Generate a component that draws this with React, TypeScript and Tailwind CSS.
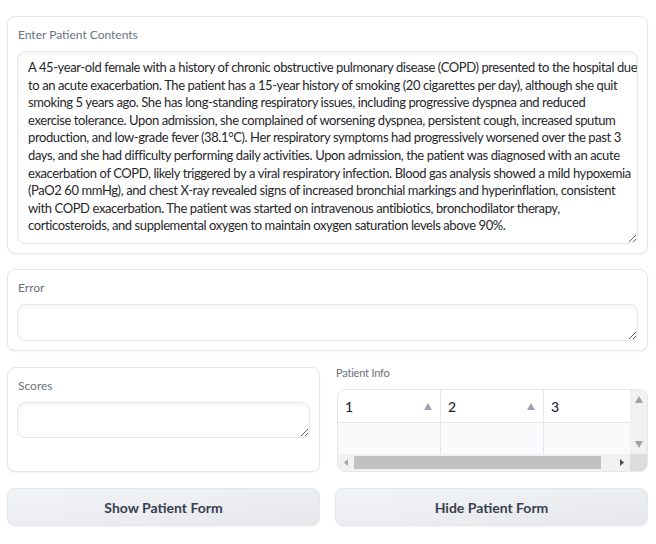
import React from "react";

const lines = [
  "A 45-year-old female with a history of chronic obstructive pulmonary disease (COPD) presented to the hospital due",
  "to an acute exacerbation. The patient has a 15-year history of smoking (20 cigarettes per day), although she quit",
  "smoking 5 years ago. She has long-standing respiratory issues, including progressive dyspnea and reduced",
  "exercise tolerance. Upon admission, she complained of worsening dyspnea, persistent cough, increased sputum",
  "production, and low-grade fever (38.1°C). Her respiratory symptoms had progressively worsened over the past 3",
  "days, and she had difficulty performing daily activities. Upon admission, the patient was diagnosed with an acute",
  "exacerbation of COPD, likely triggered by a viral respiratory infection. Blood gas analysis showed a mild hypoxemia",
  "(PaO2 60 mmHg), and chest X-ray revealed signs of increased bronchial markings and hyperinflation, consistent",
  "with COPD exacerbation. The patient was started on intravenous antibiotics, bronchodilator therapy,",
  "corticosteroids, and supplemental oxygen to maintain oxygen saturation levels above 90%.",
];

const panel =
  "rounded-lg border border-[#e5e7eb] bg-white p-[9px] shadow-[0_1px_2px_rgba(0,0,0,0.05)]";
const label = "block pl-[1px] h-[18px] leading-[18px] text-[12px] text-[#6b7280] mb-[7px]";
const ta =
  "block w-full rounded-lg border border-[#e5e7eb] bg-white px-[10px] text-[13px] tracking-[-0.4px] leading-[17.6px] text-[#27272a] outline-none shadow-[inset_0_2px_4px_rgba(0,0,0,0.05)]";

function Tri({ className }: { className: string }) {
  return (
    <svg width="8" height="7" viewBox="0 0 8 7" className={className}>
      <path d="M4 0 L8 7 L0 7 Z" fill="currentColor" />
    </svg>
  );
}

function HeaderCell({ n }: { n: string }) {
  return (
    <div className="flex w-[103px] shrink-0 items-center justify-between border-r border-[#e5e7eb] pl-[7px] pr-[8px] h-full">
      <span className="text-[14px] font-medium text-[#1f2937]">{n}</span>
      <Tri className="text-[#9ca3af]" />
    </div>
  );
}

export default function App() {
  return (
    <div
      className="min-h-[544px] bg-white pt-[16px] pl-[7px] pr-[8px]"
      style={{ fontFamily: "Lato, 'Liberation Sans', sans-serif" }}
    >
      <div className={panel}>
        <span className={label}>Enter Patient Contents</span>
        <textarea
          readOnly
          value={lines.join("\n")}
          className={
            ta +
            " h-[193px] pt-[7px] pb-[7px] overflow-hidden whitespace-pre border-[#93c5fd] shadow-[0_0_0_2px_#e0ecfd]"
          }
        />
      </div>

      <div className={panel + " mt-[15px]"}>
        <span className={label}>Error</span>
        <textarea readOnly value="" className={ta + " h-[37px] py-[8px] overflow-hidden"} />
      </div>

      <div className="mt-[16px] grid grid-cols-2 gap-[15px]">
        <div className={panel}>
          <span className={label}>Scores</span>
          <textarea readOnly value="" className={ta + " h-[36px] py-[8px] overflow-hidden"} />
        </div>

        <div className="flex flex-col">
          <span className="block pl-[1px] text-[11px] tracking-[-0.2px] leading-[12px] text-[#6b7280] mb-[10px]">
            Patient Info
          </span>
          <div className="ml-[2px] flex h-[83px] flex-col overflow-hidden rounded-lg border border-[#e5e7eb] bg-white">
            <div className="flex h-[64px]">
              <div className="flex-1 overflow-hidden">
                <div className="flex h-[33px] border-b border-[#e5e7eb] bg-white">
                  <HeaderCell n="1" />
                  <HeaderCell n="2" />
                  <HeaderCell n="3" />
                </div>
                <div className="flex h-[31px] bg-[#f9fafb]">
                  <div className="w-[103px] shrink-0 border-r border-[#e5e7eb]" />
                  <div className="w-[103px] shrink-0 border-r border-[#e5e7eb]" />
                  <div className="w-[103px] shrink-0" />
                </div>
              </div>
              <div className="flex w-[17px] flex-col items-center justify-between bg-[#f1f1f1] py-[6px]">
                <Tri className="text-[#a3a3a3]" />
                <Tri className="rotate-180 text-[#a3a3a3]" />
              </div>
            </div>
            <div className="flex h-[17px]">
              <div className="flex flex-1 items-center bg-[#f1f1f1]">
                <div className="flex w-[16px] items-center justify-center">
                  <svg width="4" height="7" viewBox="0 0 4 7">
                    <path d="M4 0 L0 3.5 L4 7 Z" fill="#a3a3a3" />
                  </svg>
                </div>
                <div className="h-[13px] w-[247px] bg-[#c1c1c1]" />
                <div className="flex-1" />
                <div className="flex w-[16px] items-center justify-center">
                  <svg width="4" height="7" viewBox="0 0 4 7">
                    <path d="M0 0 L4 3.5 L0 7 Z" fill="#505050" />
                  </svg>
                </div>
              </div>
              <div className="w-[17px] bg-[#dcdcdc]" />
            </div>
          </div>
        </div>
      </div>

      <div className="mt-[16px] grid grid-cols-2 gap-[15px]">
        <button className="h-[38px] rounded-lg border border-[#e5e7eb] bg-gradient-to-br from-[#f3f4f6] to-[#e5e7eb] text-[14px] font-bold text-[#374151] shadow-[0_1px_2px_rgba(0,0,0,0.05)]">
          Show Patient Form
        </button>
        <button className="h-[38px] rounded-lg border border-[#e5e7eb] bg-gradient-to-br from-[#f3f4f6] to-[#e5e7eb] text-[14px] font-bold text-[#374151] shadow-[0_1px_2px_rgba(0,0,0,0.05)]">
          Hide Patient Form
        </button>
      </div>
    </div>
  );
}
